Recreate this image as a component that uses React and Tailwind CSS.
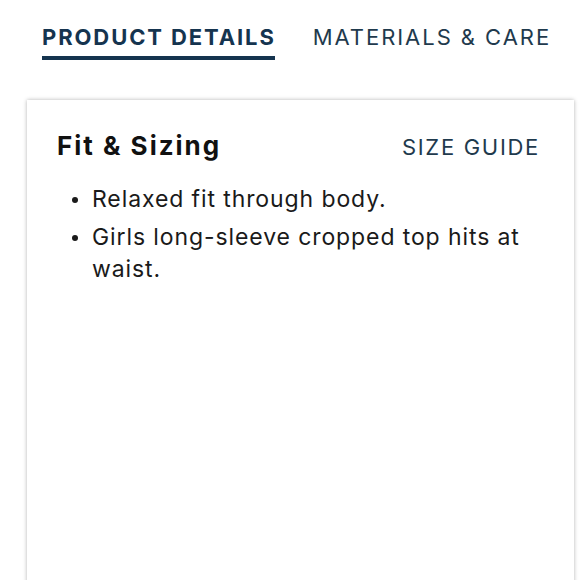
import React from 'react';

const items = [
  'Relaxed fit through body.',
  'Girls long-sleeve cropped top hits at waist.',
];

const App = () => {
  return (
    <div className="w-[580px] h-[580px] overflow-hidden bg-white font-['Inter',sans-serif]">
      {/* Tabs */}
      <div className="flex items-start pl-[42px] pt-[23px]">
        <div className="flex flex-col">
          <span className="text-[22px] leading-[28px] font-bold text-[#15344f] tracking-[1.9px]">
            PRODUCT DETAILS
          </span>
          <div className="mt-[5px] h-[4px] w-[233px] bg-[#15344f]" />
        </div>
        <span className="ml-[37px] text-[22px] leading-[28px] font-normal text-[#1f3a4d] tracking-[1.95px]">
          MATERIALS &amp; CARE
        </span>
      </div>

      {/* Card */}
      <div className="mt-[40px] ml-[27px] w-[547px] h-[520px] bg-white shadow-[0_0_4px_rgba(0,0,0,0.3)] pl-[30px] pr-[34px] pt-[30px]">
        <div className="flex items-baseline justify-between">
          <h2 className="text-[26px] leading-[32px] font-bold text-[#111] tracking-[2px]">Fit &amp; Sizing</h2>
          <span className="text-[22px] leading-[32px] text-[#1f3a4d] tracking-[1.7px]">SIZE GUIDE</span>
        </div>
        <ul className="mt-[20px] flex flex-col gap-[6px]">
          {items.map((t) => (
            <li key={t} className="flex text-[23px] leading-[32px] text-[#1a1a1a] tracking-[0.9px]">
              <span className="shrink-0 w-[35px] pl-[15px] pt-[14px]">
                <span className="block w-[6px] h-[6px] rounded-full bg-[#1a1a1a]" />
              </span>
              <span>{t}</span>
            </li>
          ))}
        </ul>
      </div>
    </div>
  );
};

export default App;
